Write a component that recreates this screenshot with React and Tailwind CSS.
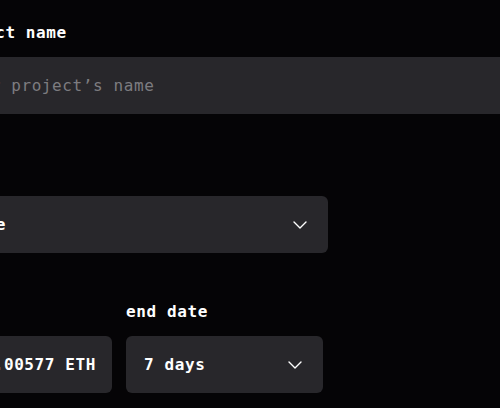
import { ChevronDown } from "lucide-react";

const Label = ({ children, className = "" }) => (
  <label className={`block text-[16px] leading-5 font-bold tracking-[0.6px] text-white ${className}`}>
    {children}
  </label>
);

const Select = ({ value, className = "", padLeft = "pl-4" }) => (
  <button
    type="button"
    className={`flex h-[57px] items-center justify-between rounded-md bg-[#28272b] pr-4 text-left text-[16px] font-bold tracking-[0.6px] text-white ${padLeft} ${className}`}
  >
    <span>{value}</span>
    <ChevronDown size={24} strokeWidth={1.4} className="shrink-0 text-white" />
  </button>
);

export default function App() {
  return (
    <div
      className="h-[408px] w-[500px] overflow-hidden bg-[#050406] pt-[23px]"
      style={{ fontFamily: '"DejaVu Sans Mono", "Liberation Mono", monospace' }}
    >
      <div className="-ml-[56px] flex w-[620px] flex-col">
        <Label>project name</Label>
        <input
          className="mt-[14px] h-[57px] w-full rounded-md bg-[#28272b] px-4 text-[16px] tracking-[0.6px] text-white outline-none placeholder:text-[#7d7c80]"
          placeholder="your project’s name"
        />

        <Label className="mt-[48px]">type</Label>
        <Select value="free" padLeft="pl-[21px]" className="mt-[14px] w-[384px]" />

        <div className="mt-[49px] flex gap-[14px]">
          <div className="flex w-[168px] flex-col">
            <Label>cost</Label>
            <div className="mt-[14px] flex h-[57px] items-center justify-end rounded-md bg-[#28272b] px-4 text-[16px] font-bold tracking-[0.6px] text-white">
              0.00577 ETH
            </div>
          </div>
          <div className="flex w-[197px] flex-col">
            <Label>end date</Label>
            <Select value="7 days" padLeft="pl-[18px]" className="mt-[14px] w-full" />
          </div>
        </div>
      </div>
    </div>
  );
}
